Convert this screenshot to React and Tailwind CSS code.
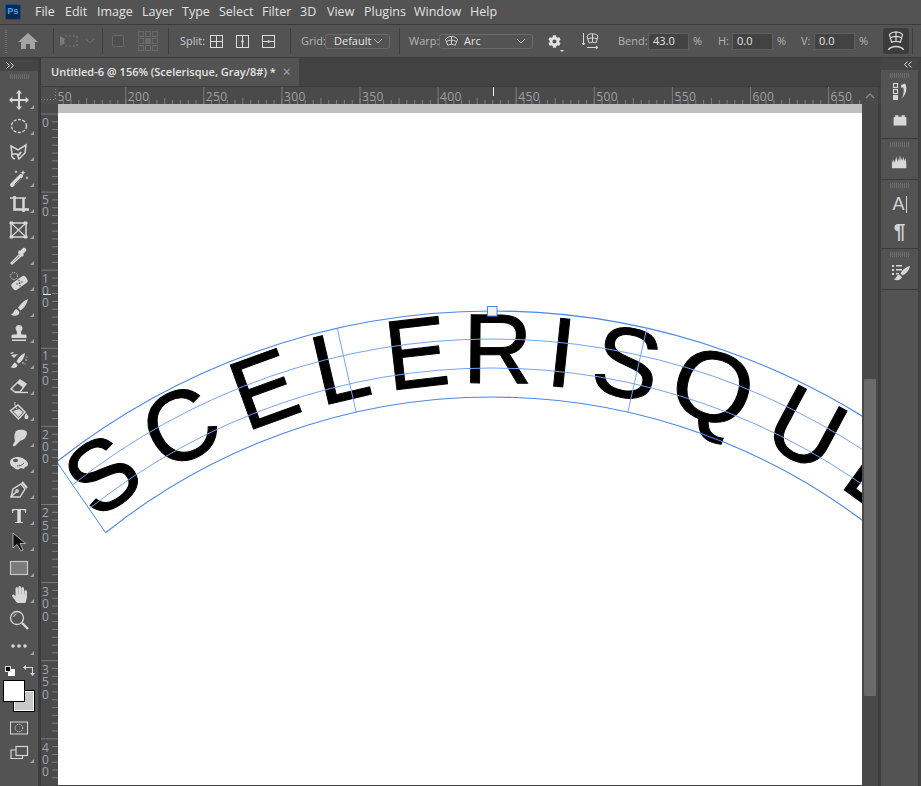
import React from 'react';
import { FaCog, FaHandPaper } from 'react-icons/fa';

const menus = [
  ['File', 'w-[30px]'], ['Edit', 'w-[32px]'], ['Image', 'w-[45px]'], ['Layer', 'w-[40px]'], ['Type', 'w-[37px]'],
  ['Select', 'w-[43px]'], ['Filter', 'w-[38px]'], ['3D', 'w-[27px]'], ['View', 'w-[37px]'], ['Plugins', 'w-[50px]'],
  ['Window', 'w-[56px]'], ['Help', 'w-[30px]'],
];

const ink = '#d8d8d8';

const Svg = ({ children, size = 20, box = 20, className = '' }) => (
  <svg width={size} height={size} viewBox={`0 0 ${box} ${box}`} className={className}>{children}</svg>
);

const icons = {
  move: <path fill={ink} d="M10 0l3.2 3.4H11V9h5.600V6.800L20 10l-3.400 3.200V11H11v5.600h2.200L10 20l-3.200-3.400H9V11H3.400v2.200L0 10l3.400-3.200V9H9V3.400H6.800z" />,
  marquee: <ellipse cx="10" cy="10" rx="7.500" ry="6.500" fill="none" stroke={ink} strokeWidth="1.300" strokeDasharray="3 1.500" />,
  lasso: <g fill="none" stroke={ink} strokeWidth="1.500"><path d="M2 4l7 4 8-5-1 8-6 6-2-5-5 0z" /><path d="M3 12c-1 2 0 4 3 5" /><path d="M9 14l3-4" strokeWidth="2" /></g>,
  wand: <g><path d="M3 17L12 8" stroke={ink} strokeWidth="4" strokeLinecap="round" /><path d="M5.500 16.500L12 10" stroke="#535353" strokeWidth="1" /><path fill={ink} d="M14 2l.7 2 2 .7-2 .7-.7 2-.7-2-2-.7 2-.7zM7 2l.4 1.300L8.700 4l-1.300.4L7 5.700l-.4-1.300L5.300 4l1.300-.7zM18 8l.4 1.300 1.300.7-1.300.4-.4 1.300-.4-1.300-1.300-.4 1.300-.7z" /></g>,
  crop: <g fill="none" stroke={ink}><path d="M1 4h16" strokeWidth="1.500" /><path d="M5.500 2v13.500H20" strokeWidth="2.500" /><path d="M14.500 4v14" strokeWidth="2.500" /></g>,
  frame: <g fill="none" stroke={ink}><rect x="2" y="3" width="15" height="14" strokeWidth="1.500" /><path d="M2 3l15 14M17 3L2 17" strokeWidth="1.100" /><path d="M1 2h3v2H1zM15 2h3v2h-3zM1 16h3v2H1zM15 16h3v2h-3z" fill={ink} /></g>,
  dropper: <g><path d="M3 18l-1-1 8-8 1.500 1.500z" fill="none" stroke={ink} strokeWidth="1.400" /><path d="M9 7l4 4 2-2-1-1 3-3c1-2-1-4-3-3l-3 3-1-1z" fill={ink} /></g>,
  heal: <g><rect x="2" y="7" width="17" height="8" rx="3" fill={ink} transform="rotate(-35 10.500 11)" /><circle cx="10.500" cy="11" r="1" fill="#555" /><circle cx="8" cy="12" r=".8" fill="#555" /><circle cx="13" cy="10" r=".8" fill="#555" /><circle cx="10" cy="8.500" r=".8" fill="#555" /><circle cx="11" cy="13.500" r=".8" fill="#555" /><circle cx="5" cy="4" r="3.500" fill="none" stroke={ink} strokeDasharray="1 1" /></g>,
  brush: <path fill={ink} d="M19 1c-4 1.500-8 5.500-10 9l2.500 2.500c3.500-2 6.500-7 7.500-11.500zM7.500 11c-3 1-2 4-5.500 5.500 3 2.500 8 1.500 8.500-2.500z" />,
  stamp: <path fill={ink} d="M10 1a3.500 3.500 0 0 0-2.300 6.200c.5 1 .3 2.300-.2 3.300H4c-1 0-1.500.8-1.500 1.500V14h15v-2c0-.7-.5-1.500-1.500-1.500h-3.500c-.5-1-.7-2.300-.2-3.300A3.500 3.500 0 0 0 10 1zM3 15.500h14V17H3z" />,
  mixer: <g fill={ink}><path d="M16 3c-4 1.500-7 5-8.500 8.500l2 2C13 11.500 15.500 7.500 16 3zM6 12.500c-2.500 1-1.500 3-4.500 4.500 3 2 6.500 1 7-2z" /><path d="M2 5l7-1-4 4zM1 3l3-1 1 1-3 1z" /><circle cx="14" cy="13" r=".8" /><circle cx="17" cy="10" r=".8" /><circle cx="16" cy="14" r=".6" /><circle cx="18" cy="7" r=".6" /></g>,
  eraser: <g><path d="M2 13l9-9 6 4-6 8H6z" fill="none" stroke={ink} strokeWidth="1.400" /><path d="M8 7l3-3 6 4-3 3.500z" fill={ink} /><path d="M6 16.500h13" stroke={ink} strokeWidth="1.300" /></g>,
  bucket: <g><path d="M1.500 8.500L9 3l7 7-6.500 7z" fill="none" stroke={ink} strokeWidth="1.500" /><path d="M4 9l6-2 4 3-4.500 5z" fill={ink} /><path d="M6 0c-.5 2 0 5 2 7" fill="none" stroke={ink} /><path d="M17 11c1 1.500 2.500 3 2.500 4.300a2 2 0 0 1-4 0c0-1 .5-2.500 1.500-4.300z" fill={ink} /></g>,
  smudge: <path fill={ink} d="M7 3c3-2 8-1.500 10 0 2 2 .5 6-2 8-1.500 1-3 1.500-4 2l-5 5c-1 .8-2.500-.2-2-1.500L6 13c-1-3-1-7 1-10z" />,
  sponge: <g><path fill={ink} d="M1 8c0-3 4-5 8-5 5 0 10 4 10 7 0 2-1.500 3-3 3l-1 2-3-1-3 1.500c-2 0-3.500-1-4-2-2-.5-4-2.500-4-5.500z" /><ellipse cx="6.500" cy="6.500" rx="2.500" ry="1.700" fill="#535353" /><path d="M8 12c2 0 5-.5 7-3" fill="none" stroke="#535353" /></g>,
  pen: <g fill="none" stroke={ink} strokeWidth="1.400"><path d="M2 17l2-8 8-5 4 5-5 8z" /><path d="M2 17l5-5" /><circle cx="8" cy="11" r="1.200" /><path d="M13 2l5 6" strokeWidth="2" /></g>,
  select: <path d="M4 1v15l4-3.500 4 6.500 2-1-3-6.500 5.500 0z" fill="#111" stroke="#c8c8c8" strokeWidth=".8" />,
  rect: <rect x="1.500" y="3.500" width="17" height="13" fill="#7b7b7b" stroke="#c8c8c8" strokeWidth="1.200" />,
  zoom: <g fill="none" stroke={ink}><circle cx="8" cy="8" r="6.500" strokeWidth="1.300" /><path d="M4.500 7a4 4 0 0 1 3-3" strokeWidth="1" /><path d="M13 13l6 6" strokeWidth="2.400" /></g>,
  dots: <g fill={ink}><circle cx="4" cy="10" r="1.800" /><circle cx="10" cy="10" r="1.800" /><circle cx="16" cy="10" r="1.800" /></g>,
  mask: <g fill="none" stroke={ink}><rect x="1.500" y="4" width="17" height="12" strokeWidth="1" /><circle cx="10" cy="10" r="3.800" strokeDasharray="1.200 1" /></g>,
  screen: <g fill="none" stroke={ink} strokeWidth="1.200"><rect x="7" y="2.500" width="11.500" height="9" /><path d="M7 6H2v8.500h11.500v-3" /></g>,
  history: <g><rect x="3.500" y="1.500" width="4" height="4" fill="none" stroke={ink} strokeWidth="1.100" /><rect x="3.500" y="7.500" width="4" height="4" fill="none" stroke={ink} strokeWidth="1.100" /><rect x="3" y="13" width="5" height="5" fill={ink} /><path d="M11 3l4-1.500c2 3 2.500 9-3 15 1.500-4 2.500-8 1-11.500l-2 1z" fill={ink} /></g>,
  block: <path fill={ink} d="M2 7l2-1V4h4v2h4V4h4v2l2 1v10H2z" />,
  histo: <path fill={ink} d="M1 18V9l1 3 1-4 1 4 2-7 1 6 1-4 1 3 1-7 1 7 1-4 1 4 1-5 1 5 1-3 1 5v6z" />,
  bpreset: <g fill={ink}><path d="M2 3h2v2H2zM6 3h6v1.500H6zM2 7h2v2H2zM6 7h6v1.500H6zM2 11h2v2H2zM6 11h3v1.500H6z" /><path d="M20 4c-4 1-8 4-9.500 7.500l2 2C16 12 19 8.500 20 4zM9 12.500c-3 1-2 3-5 5 3 1.500 7.500.5 8-2.500z" /></g>,
};

const Flyout = () => (
  <span className="absolute right-[4px] bottom-[4px] w-0 h-0 border-l-[4px] border-l-transparent border-b-[4px] border-b-[#a0a0a0]" />
);

const Tool = ({ name, fly = true }) => (
  <div className="relative h-[26px] flex items-center justify-center">
    <Svg>{icons[name]}</Svg>
    {fly && <Flyout />}
  </div>
);

const Grip = () => (
  <div className="h-[5px] w-[19px] mx-auto bg-[repeating-linear-gradient(90deg,#6e6e6e_0,#6e6e6e_1px,transparent_1px,transparent_2px)]" />
);

const Sep = ({ className }) => <div className={`w-px h-[26px] bg-[#3d3d3d] ${className}`} />;

const Arc = ({ size = 16, color = ink }) => (
  <Svg size={size}>
    <g fill="none" stroke={color} strokeWidth="1.200">
      <path d="M2 7c4-5 12-5 16 0l-3 8c-3-1.500-7-1.500-10 0z" />
      <path d="M10 3.300V13.500M3.500 10c4-2.500 9-2.500 13 0" />
    </g>
  </Svg>
);

const Chevron = ({ color = '#b8b8b8' }) => (
  <svg width="10" height="6" viewBox="0 0 10 6"><path d="M1 1l4 4 4-4" fill="none" stroke={color} /></svg>
);

const DoubleChevron = ({ flip = false }) => (
  <svg width="8" height="7" viewBox="0 0 8 7" className={flip ? 'rotate-180' : ''}>
    <path d="M.5.5l3 3-3 3M4.500.5l3 3-3 3" fill="none" stroke="#e0e0e0" />
  </svg>
);

const SplitIcon = ({ kind }) => (
  <svg width="13" height="13" viewBox="0 0 13 13" className="ml-[13px] first:ml-0">
    <rect x=".5" y=".5" width="12" height="12" fill="none" stroke="#dcdcdc" />
    {kind !== 'h' && <path d="M6.500 0v13" stroke="#dcdcdc" />}
    {kind !== 'v' && <path d="M0 6.500h13" stroke="#dcdcdc" />}
    {kind !== 'both' && <circle cx="6.500" cy="6.500" r="1.200" fill="#dcdcdc" />}
  </svg>
);

const Select = ({ className, children }) => (
  <div className={`h-[15px] rounded-[3px] border border-[#6b6b6b] flex items-center justify-between pr-[6px] text-[#e4e4e4] ${className}`}>
    {children}
    <Chevron />
  </div>
);

const Field = ({ value, className }) => (
  <div className={`w-[41px] h-[17px] bg-[#424242] border border-[#5f5f5f] pl-[4px] flex items-center text-[#e4e4e4] ${className}`}>{value}</div>
);

const Label = ({ children, className }) => <div className={`text-[#b5b5b5] ${className}`}>{children}</div>;

const OptionsBar = () => (
  <div className="h-[33px] flex items-center bg-[#535353] text-[11px] border-b border-[#3b3b3b]">
    <div className="ml-[5px] w-[2px] h-[24px] bg-[repeating-linear-gradient(0deg,#6e6e6e_0,#6e6e6e_1px,transparent_1px,transparent_2px)]" />
    <div className="ml-[11px] w-[20px] flex justify-center">
      <Svg><path fill="#a4a4a4" d="M10 2L0 11h3v7h5v-5h4v5h5v-7h3z" /></Svg>
    </div>
    <Sep className="ml-[15px]" />
    <svg className="ml-[6px]" width="18" height="14" viewBox="0 0 18 14">
      <path d="M0 2v10l5-3-1-2 1-2z" fill="#7a7a7a" />
      <path d="M5 2h12v10H5" fill="none" stroke="#7a7a7a" strokeDasharray="2 2" />
    </svg>
    <div className="ml-[7px] w-[10px] flex"><Chevron color="#6a6a6a" /></div>
    <Sep className="ml-[7px]" />
    <div className="ml-[9px] w-[12px] h-[12px] rounded-[2px] border border-[#6a6a6a] bg-[#4d4d4d]" />
    <svg className="ml-[14px]" width="20" height="20" viewBox="0 0 20 20">
      <g fill="none" stroke="#6a6a6a">
        <rect x=".5" y=".5" width="5" height="5" /><rect x="7.500" y=".5" width="5" height="5" /><rect x="14.500" y=".5" width="5" height="5" />
        <rect x=".5" y="7.500" width="5" height="5" /><rect x="14.500" y="7.500" width="5" height="5" />
        <rect x=".5" y="14.500" width="5" height="5" /><rect x="7.500" y="14.500" width="5" height="5" /><rect x="14.500" y="14.500" width="5" height="5" />
      </g>
      <rect x="7" y="7" width="6" height="6" fill="#6a6a6a" />
    </svg>
    <Sep className="ml-[10px]" />
    <Label className="ml-[11px] w-[23px] text-[#c2ccd2]">Split:</Label>
    <div className="ml-[7px] flex items-center">
      <SplitIcon kind="both" />
      <SplitIcon kind="v" />
      <SplitIcon kind="h" />
    </div>
    <Sep className="ml-[15px]" />
    <Label className="ml-[10px] w-[23px]">Grid:</Label>
    <Select className="ml-px w-[65px] pl-[8px]">Default</Select>
    <Sep className="ml-[9px]" />
    <Label className="ml-[9px] w-[28px]">Warp:</Label>
    <Select className="ml-[2px] w-[94px] pl-[4px]">
      <div className="flex items-center gap-[5px]"><Arc size={15} /><span>Arc</span></div>
    </Select>
    <div className="relative ml-[15px] w-[16px]">
      <FaCog size={13} color="#e2e2e2" />
      <span className="absolute right-0 bottom-[-4px] w-0 h-0 border-x-[2px] border-x-transparent border-t-[2px] border-t-[#e2e2e2]" />
    </div>
    <svg className="ml-[18px]" width="18" height="18" viewBox="0 0 18 18">
      <g fill="none" stroke={ink}>
        <path d="M1.500 1v12M0 11l1.500 2L3 11" />
        <path d="M5 15.500h11M14 14l2 1.500-2 1.500" />
        <path d="M5 4c2.500-3 8-3 11 0l-2 7c-2-1-5-1-7 0zM10.500 2v8M5.500 7c3-1.500 7-1.500 10 0" />
      </g>
    </svg>
    <Label className="ml-[18px] w-[26px]">Bend:</Label>
    <Field value="43.0" className="ml-[4px]" />
    <Label className="ml-[4px] w-[12px]">%</Label>
    <Label className="ml-[13px] w-[11px]">H:</Label>
    <Field value="0.0" className="ml-[3px]" />
    <Label className="ml-[4px] w-[12px]">%</Label>
    <Label className="ml-[12px] w-[10px]">V:</Label>
    <Field value="0.0" className="ml-[3px]" />
    <Label className="ml-[4px] w-[12px]">%</Label>
    <div className="ml-[12px] w-[26px] h-[26px] rounded-[3px] bg-[#3c3c3c] flex items-center justify-center">
      <Svg size={22}>
        <g fill="none" stroke={ink} strokeWidth="1.100">
          <path d="M4 4c3-3 9-3 12 0l-2 7c-2-1-6-1-8 0zM10 2v8M5 7c3-1.500 7-1.500 10 0" />
          <path d="M3 18c3-4 11-4 14 0" strokeWidth="1.300" />
        </g>
      </Svg>
    </div>
    <Sep className="ml-[3px]" />
  </div>
);

const tools = ['move', 'marquee', 'lasso', 'wand', 'crop', 'frame', 'dropper', 'heal', 'brush', 'stamp', 'mixer', 'eraser', 'bucket', 'smudge', 'sponge', 'pen'];

const Toolbar = () => (
  <div className="w-[41px] flex flex-col bg-[#3d3d3d] border-r border-[#393939]">
    <div className="h-[12px] w-[38px] bg-[#454545] pl-[6px] flex items-center mt-px"><DoubleChevron /></div>
    <div className="w-[38px] flex-1 bg-[#535353] pt-[3px] flex flex-col">
      <Grip />
      <div className="mt-[8px] w-[38px]">
        {tools.map((t) => <Tool key={t} name={t} />)}
        <div className="relative h-[26px] flex items-center justify-center">
          <span className="font-['Liberation_Serif',serif] font-bold text-[22px] leading-none text-[#dcdcdc]">T</span>
          <Flyout />
        </div>
        <Tool name="select" />
        <Tool name="rect" />
        <div className="relative h-[26px] flex items-center justify-center"><FaHandPaper size={17} color={ink} /><Flyout /></div>
        <Tool name="zoom" fly={false} />
        <Tool name="dots" />
      </div>
      <div className="mt-[4px] h-[16px] flex items-center pl-[5px]">
        <div className="relative w-[10px] h-[10px]">
          <div className="absolute left-[3px] top-[3px] w-[7px] h-[7px] bg-white" />
          <div className="absolute left-0 top-0 w-[6px] h-[6px] bg-black border border-[#ddd]" />
        </div>
        <svg className="ml-[8px]" width="12" height="12" viewBox="0 0 12 12">
          <path d="M3 0L0 2.500 3 5V3h6v5H7l2.500 3L12 8h-2V2H3z" fill={ink} />
        </svg>
      </div>
      <div className="relative h-[32px] mt-[2px]">
        <div className="absolute left-[14px] top-[10px] w-[20px] h-[20px] bg-[#c8c8c8] border border-white outline outline-black" />
        <div className="absolute left-[4px] top-0 w-[20px] h-[20px] bg-white outline outline-black" />
      </div>
      <div className="mt-[2px]"><Tool name="mask" fly={false} /></div>
      <Tool name="screen" />
    </div>
  </div>
);

const Ruler = () => {
  const majors = [[47.6, '50'], [125.7, '200'], [203.8, '250'], [281.9, '300'], [360, '350'], [438.1, '400'], [516.2, '450'], [594.3, '500'], [672.4, '550'], [750.5, '600'], [828.6, '650']];
  const minors = Array.from({ length: 105 }, (_, i) => 47.6 + i * 7.81);
  return (
    <svg width="821" height="17" viewBox="41 88 821 17" className="block font-['Open_Sans',sans-serif] bg-[#4a4a4a]">
      {minors.map((x, i) => (
        <path key={i} d={`M${x} ${i % 5 === 0 ? 99 : 101}V105`} stroke="#808080" />
      ))}
      {majors.slice(1).map(([x]) => <path key={x} d={`M${x} 88V105`} stroke="#7a7a7a" />)}
      {majors.map(([x, t], i) => (
        <text key={t} x={i === 0 ? 57.500 : x + 2} y="102" fontSize="12" letterSpacing=".4" fill="#a0a0a6">{t}</text>
      ))}
      <path d="M493.500 88V97" stroke="#f0f0f0" />
      <rect x="41" y="88" width="17" height="17" fill="#4f4f4f" />
      <path d="M41 100.500H55.500V90" fill="none" stroke="#8a8a8a" strokeDasharray="1 2" />
    </svg>
  );
};

const sideLabels = [
  [['0'], [124]], [['5', '0'], [201, 213]], [['1', '0', '0'], [280, 292, 304]], [['1', '5', '0'], [357, 370, 382]],
  [['2', '0', '0'], [436, 448, 460]], [['2', '5', '0'], [514, 527, 539]], [['3', '0', '0'], [593, 605, 618]],
  [['3', '5', '0'], [671, 683, 696]], [['4', '0', '0'], [749, 761, 773]],
];

const SideRuler = () => {
  const minors = Array.from({ length: 90 }, (_, i) => 115 + i * 7.81);
  return (
    <svg width="17" height="681" viewBox="41 105 17 681" className="block font-['Open_Sans',sans-serif] bg-[#4a4a4a]">
      {minors.map((y, i) => (
        <path key={i} d={`M${i % 10 === 0 ? 41 : 52} ${y}H58`} stroke={i % 10 === 0 ? '#7a7a7a' : '#808080'} />
      ))}
      {sideLabels.map(([chars, ys]) => chars.map((c, i) => (
        <text key={ys[i]} x="42" y={ys[i] + 4} fontSize="12" fill="#9ea4b6">{c}</text>
      )))}
      <path d="M43 295.500H51" stroke="#f0f0f0" />
    </svg>
  );
};

// warp envelope, all in page coordinates
const CX = 492;
const CY = 1016;
const polar = (r, deg) => {
  const a = (deg * Math.PI) / 180;
  return [CX + r * Math.sin(a), CY - r * Math.cos(a)];
};
const arc = (r, from, to) => {
  const [x1, y1] = polar(r, from);
  const [x2, y2] = polar(r, to);
  return `M${x1} ${y1}A${r} ${r} 0 0 1 ${x2} ${y2}`;
};
const spoke = (deg, deg2 = deg) => {
  const [x1, y1] = polar(704, deg);
  const [x2, y2] = polar(618, deg2);
  return `M${x1} ${y1}L${x2} ${y2}`;
};

const letters = [
  ['S', -35.8, 0.98], ['C', -27.9, 1], ['E', -20, 0.95], ['L', -13.2, 1], ['E', -6.5, 0.95], ['R', 0.5, 0.97],
  ['I', 6, 1], ['S', 11.7, 1], ['Q', 19.4, 1.05], ['U', 28.2, 0.98], ['E', 36, 0.95],
];

const WarpCanvas = () => (
  <svg width="804" height="672" viewBox="58 114 804 672" className="block bg-white">
    <defs>
      <filter id="soft" x="-10%" y="-10%" width="120%" height="120%">
        <feTurbulence type="fractalNoise" baseFrequency="0.35" numOctaves="1" seed="3" result="n" />
        <feDisplacementMap in="SourceGraphic" in2="n" scale="1.400" result="d" />
        <feGaussianBlur in="d" stdDeviation="0.6" />
      </filter>
    </defs>
    <g filter="url(#soft)">
      {letters.map(([ch, deg, sx], i) => (
        <text
          key={i}
          transform={`translate(${CX} ${CY}) rotate(${deg}) translate(0 -632) scale(${sx} 1)`}
          textAnchor="middle"
          fontFamily="'Liberation Sans', Arial, sans-serif"
          fontSize="99"
          fill="#000"
          stroke="#000"
          strokeWidth="1"
        >
          {ch}
        </text>
      ))}
    </g>
    <g fill="none">
      <path d={arc(704, -38.2, 38.2)} stroke="#4a86ec" strokeWidth="1.200" />
      <path d={arc(618, -38.7, 38.7)} stroke="#4a86ec" strokeWidth="1.200" />
      <path d={arc(676, -38.3, 38.3)} stroke="#76a3f0" />
      <path d={arc(647, -38.5, 38.5)} stroke="#76a3f0" />
      <path d={spoke(-38.2, -38.7)} stroke="#4a86ec" />
      <path d={spoke(-12.7)} stroke="#76a3f0" />
      <path d={spoke(12.7)} stroke="#76a3f0" />
    </g>
    <rect x="487.500" y="307.500" width="9.500" height="9.500" fill="#f1f1f1" stroke="#4a86ec" />
  </svg>
);

const Dock = () => (
  <div className="w-[40px] flex flex-col bg-[#424242]">
    <div className="h-[12px] w-[37px] bg-[#454545] flex items-center justify-end pr-[6px] mt-px"><DoubleChevron flip /></div>
    <div className="w-[37px] flex flex-col gap-px bg-[#3a3a3a]">
      <div className="h-[68px] bg-[#535353] pt-[3px] flex flex-col items-center">
        <Grip />
        <div className="mt-[4px]"><Svg>{icons.history}</Svg></div>
        <div className="mt-[10px]"><Svg size={16}>{icons.block}</Svg></div>
      </div>
      <div className="h-[40px] bg-[#535353] pt-[3px] flex flex-col items-center">
        <Grip />
        <div className="mt-[5px]"><Svg size={18}>{icons.histo}</Svg></div>
      </div>
      <div className="h-[68px] bg-[#535353] pt-[3px] flex flex-col items-center">
        <Grip />
        <div className="mt-[3px] h-[26px] flex items-center text-[#d4d4d4] font-['Liberation_Sans',sans-serif] text-[18px] leading-none">
          A<span className="ml-[1px] w-px h-[17px] bg-[#d4d4d4]" />
        </div>
        <div className="h-[26px] flex items-center text-[#d4d4d4] font-['Liberation_Sans',sans-serif] font-bold text-[21px] leading-none">¶</div>
      </div>
      <div className="h-[40px] bg-[#535353] pt-[3px] flex flex-col items-center">
        <Grip />
        <div className="mt-[5px]"><Svg>{icons.bpreset}</Svg></div>
      </div>
      <div className="h-[496px] bg-[#535353]" />
    </div>
  </div>
);

export default function App() {
  return (
    <div className="w-[921px] h-[786px] overflow-hidden flex flex-col bg-[#424242] font-['Open_Sans',sans-serif]">
      <div className="h-[25px] flex items-center bg-[#535353] border-b border-[#3b3b3b] text-[12.5px] text-[#e2e2e2]">
        <div className="ml-[5px] w-[16px] h-[16px] rounded-[2px] bg-[#0b2a4d] border border-[#1c4d7c] flex items-center justify-center text-[9px] font-bold text-[#31a8ff] font-['Liberation_Sans',sans-serif]">Ps</div>
        <div className="ml-[14px] flex">
          {menus.map(([m, w]) => <div key={m} className={w}>{m}</div>)}
        </div>
      </div>
      <OptionsBar />
      <div className="flex flex-1 min-h-0">
        <Toolbar />
        <div className="w-[840px] flex flex-col">
          <div className="h-[29px] flex items-end border-b border-[#3a3a3a]">
            <div className="w-[258px] h-[28px] bg-[#535353] flex items-center pl-[10px] text-[11px] font-semibold text-[#e4e4e4] whitespace-nowrap">
              <span>Untitled-6 @ 156% (Scelerisque, Gray/8#) *</span>
              <span className="ml-[7px] text-[#a8a8a8] text-[14px] leading-none font-normal">×</span>
            </div>
          </div>
          <div className="flex h-[17px]">
            <Ruler />
            <div className="w-[16px] flex items-center justify-center bg-[#4a4a4a]">
              <svg width="10" height="6" viewBox="0 0 10 6"><path d="M1 5l4-4 4 4" fill="none" stroke="#8c8c8c" strokeWidth="1.200" /></svg>
            </div>
          </div>
          <div className="flex flex-1 min-h-0">
            <SideRuler />
            <div className="w-[804px] flex flex-col">
              <div className="h-[9px] bg-[#bfbfbf]" />
              <WarpCanvas />
            </div>
            <div className="w-[16px] bg-[#494949] pt-[275px] px-[2px]">
              <div className="h-[317px] bg-[#6a6a6a] rounded-[1px]" />
            </div>
            <div className="flex-1 bg-[#3d3d3d]" />
          </div>
        </div>
        <Dock />
      </div>
    </div>
  );
}
